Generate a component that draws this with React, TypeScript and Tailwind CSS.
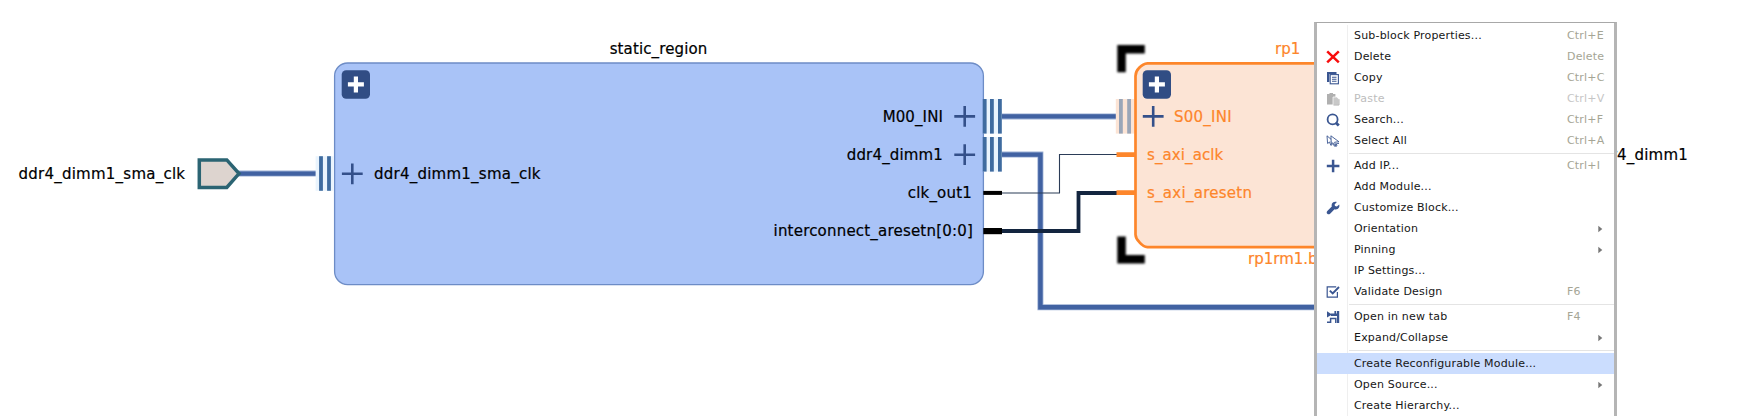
import React from "react";

function InterfaceBars({ x, y, offsets, bar, back, width }: {
  x: number; y: number; offsets: number[]; bar: string; back: string; width: number;
}) {
  return (
    <g>
      <rect x={x} y={y} width={width} height={34.6} fill={back} />
      {offsets.map((o) => (
        <rect key={o} x={x + o} y={y} width={3.8} height={34.6} fill={bar} />
      ))}
    </g>
  );
}

function PinPlus({ x, y }: { x: number; y: number }) {
  return <path d={`M${x - 10.4} ${y}H${x + 10.4}M${x} ${y - 10.4}V${y + 10.4}`} stroke="#34508a" strokeWidth={2.6} />;
}

function ExpandButton({ x, y }: { x: number; y: number }) {
  return (
    <g>
      <rect x={x} y={y} width={28.3} height={28.6} rx={4.5} fill="#314d84" />
      <path d={`M${x + 6.2} ${y + 14.2}h16M${x + 14.2} ${y + 6.2}v16`} stroke="#fff" strokeWidth={4.2} />
    </g>
  );
}

function Wire({ d }: { d: string }) {
  return (
    <g fill="none">
      <path d={d} stroke="#9aaed4" strokeWidth={6} />
      <path d={d} stroke="#4162a2" strokeWidth={4.4} />
    </g>
  );
}

function Drawing() {
  return (
    <svg className="block" width="1749" height="416" viewBox="0 0 1749 416">
      <defs>
        <filter id="soft" x="-20%" y="-20%" width="140%" height="140%">
          <feGaussianBlur stdDeviation="0.9" />
        </filter>
      </defs>

      <rect x={334.6} y={63} width={648.8} height={221.6} rx={13} fill="#a9c3f7" stroke="#6d8cc6" strokeWidth={1.3} />
      <ExpandButton x={341.7} y={70.2} />

      <Wire d="M238 173.6H316" />
      <path d="M199.3 159.9H226.8L239 173.6L226.8 187.5H199.3Z" fill="#ddd4cf" stroke="#2b6473" strokeWidth={3.5} />
      <InterfaceBars x={315.6} y={156.2} offsets={[3.5, 11.5]} width={18} bar="#3f6b9f" back="#eaf4fd" />
      <PinPlus x={352.3} y={173.8} />

      <Wire d="M1002 116.4H1117" />
      <Wire d="M1002 154.6H1040.4V307.3H1316" />
      <path d="M1002 193H1059.5V154.5H1117" fill="none" stroke="#2b3c57" strokeWidth={1.1} />
      <path d="M1002 231H1078.5V193H1117" fill="none" stroke="#13253f" strokeWidth={3.8} />
      <path d="M983.3 192.9H1002" stroke="#000" strokeWidth={4} />
      <path d="M983.3 231.1H1002" stroke="#000" strokeWidth={6.2} />
      <InterfaceBars x={983.2} y={99} offsets={[-0.4, 6.8, 14.8]} width={18.6} bar="#3f6b9f" back="#eaf4fd" />
      <InterfaceBars x={983.2} y={137} offsets={[-0.4, 6.8, 14.8]} width={18.6} bar="#3f6b9f" back="#eaf4fd" />
      <PinPlus x={964.7} y={116.4} />
      <PinPlus x={964.7} y={154.7} />

      <g filter="url(#soft)" fill="#000">
        <path d="M1117.3 45H1144.8V53.5H1125.8V72.3H1117.3Z" />
        <path d="M1117.3 236.5H1125.8V255H1144.8V263.6H1117.3Z" />
      </g>
      <InterfaceBars x={1115.8} y={99} offsets={[3.2, 11.4]} width={18.6} bar="#9aa6b8" back="#fce4d5" />
      <path
        d="M1330 63.3H1147.5Q1143 63.6 1139 68Q1135.5 71.5 1135.5 76V234.5Q1135.6 238.5 1139.5 242.3Q1143.5 246.8 1147.5 247.2H1330"
        fill="#fce4d5" stroke="#fd862b" strokeWidth={2.7}
      />
      <path d="M1116.5 154.6H1135M1116.5 192.7H1135" stroke="#fd862b" strokeWidth={4.8} />
      <ExpandButton x={1142.7} y={70.2} />
      <PinPlus x={1153.2} y={116.4} />
    </svg>
  );
}

/** Names of the pins on the static block, laid over its outline. */
function StaticRegion() {
  return (
    <section className="absolute left-[334px] top-[39px] flex w-[650px] flex-col">
      <h2 className="pr-[1px] text-center tracking-[0.12px]">static_region</h2>
      <div className="mt-12 flex justify-between">
        <div className="pl-10 pt-[57px] tracking-[0.24px]">ddr4_dimm1_sma_clk</div>
        <ul className="flex flex-col items-end gap-[18px] pr-[11px]">
          <li className="pr-[30px] tracking-[0.1px]">M00_INI</li>
          <li className="pr-[30px] tracking-[0.15px]">ddr4_dimm1</li>
          <li className="pr-[1px] tracking-[0.2px]">clk_out1</li>
          <li className="tracking-[0.2px]">interconnect_aresetn[0:0]</li>
        </ul>
      </div>
    </section>
  );
}

function ReconfigurablePartition() {
  return (
    <section className="absolute left-[1135px] top-[39px] flex w-[306px] flex-col text-[#fd862b]">
      <h2 className="pl-[140px]">rp1</h2>
      <ul className="mt-12 flex flex-col gap-[18px] pl-3">
        <li className="pl-[27px] tracking-[0.25px]">S00_INI</li>
        <li className="tracking-[0.1px]">s_axi_aclk</li>
        <li className="tracking-[0.27px]">s_axi_aresetn</li>
      </ul>
      <p className="mt-[46px] pl-[113px]">rp1rm1.bd</p>
    </section>
  );
}

const BLUE = "#3a5691";

function DeleteIcon() {
  return <path d="M1.2 1.4L12.8 12.4M12.8 1.4L1.2 12.4" stroke="#f80d0d" strokeWidth={2.5} fill="none" />;
}
function CopyIcon() {
  return (
    <g>
      <path d="M1 1H10.5V3H3.4V11H1Z" fill={BLUE} />
      <rect x={4.2} y={3.6} width={8.2} height={9.2} fill="#fff" stroke={BLUE} strokeWidth={1.1} />
      <path d="M6 6.3H10.5M6 8.3H10.5M6 10.3H10.5" stroke={BLUE} strokeWidth={1.1} />
    </g>
  );
}
function PasteIcon() {
  return (
    <g>
      <path d="M1 2H3.5V1H7V2H9.4V12.5H1Z" fill="#b0b0b0" />
      <path d="M7 5H10.8L13 7.2V13.2H7Z" fill="#c8c8c8" stroke="#fff" strokeWidth={0.7} />
      <path d="M7.6 13H13V7.2" stroke="#b5b5b5" fill="none" />
    </g>
  );
}
function SearchIcon() {
  return (
    <g fill="none" stroke={BLUE}>
      <circle cx={6.6} cy={6.4} r={5} strokeWidth={1.8} />
      <path d="M9.6 9.4L12.8 12.6" strokeWidth={2.8} />
    </g>
  );
}
function SelectAllIcon() {
  return (
    <g fill="#fff" stroke={BLUE} strokeWidth={0.9}>
      <path d="M1 1.8L1.6 9.5L3.5 8L4.8 11.3L6.2 10.6L5 7.6L7 7Z" />
      <path d="M4.9 1.8L5.3 10.2L7 8.7L8.3 12.2L9.7 11.5L8.6 8.2L13 7.8Z" />
      <path d="M8.6 10.2L9.6 12.4L11 11.8L10.2 9.8L13 9.4" fill="none" />
    </g>
  );
}
function AddIcon() {
  return <path d="M0.8 7H13.4M7.1 0.7V13.3" stroke={BLUE} strokeWidth={2.5} />;
}
function WrenchIcon() {
  return (
    <path
      d="M13.2 3.5L10.9 5.6L9 5.1L8.6 3.4L10.9 1.1C9 .2 6.7 .9 5.9 2.7C5.5 3.7 5.5 4.6 5.8 5.5L1.3 10C.5 10.8 .5 12.1 1.3 12.8C2.1 13.6 3.3 13.5 4.1 12.7L8.5 8.3C10.2 8.9 12.1 8.2 13 6.6C13.5 5.6 13.6 4.5 13.2 3.5Z"
      fill={BLUE}
    />
  );
}
function ValidateIcon() {
  return (
    <g fill="none" stroke={BLUE}>
      <path d="M10.2 1.8H1.2V12.2H11.4V7" strokeWidth={1.2} />
      <path d="M3.8 5.6L6.7 8.5L13 2" strokeWidth={1.9} />
    </g>
  );
}
function OpenTabIcon() {
  return (
    <g fill={BLUE}>
      <path d="M1 1.2L6 4.4L1 7.6Z" />
      <path d="M8.4 1H10.2V3.6H11V1H13.2V13H11V6H5V3.6H8.4Z" />
      <path d="M1 12.2H4.6V8.6H9.8V13" fill="none" stroke={BLUE} strokeWidth={1.5} />
    </g>
  );
}

type Item = {
  text: string;
  icon?: () => React.JSX.Element;
  keys?: string;
  submenu?: boolean;
  disabled?: boolean;
  active?: boolean;
};

const groups: Item[][] = [
  [
    { text: "Sub-block Properties...", keys: "Ctrl+E" },
    { text: "Delete", icon: DeleteIcon, keys: "Delete" },
    { text: "Copy", icon: CopyIcon, keys: "Ctrl+C" },
    { text: "Paste", icon: PasteIcon, keys: "Ctrl+V", disabled: true },
    { text: "Search...", icon: SearchIcon, keys: "Ctrl+F" },
    { text: "Select All", icon: SelectAllIcon, keys: "Ctrl+A" },
  ],
  [
    { text: "Add IP...", icon: AddIcon, keys: "Ctrl+I" },
    { text: "Add Module..." },
    { text: "Customize Block...", icon: WrenchIcon },
    { text: "Orientation", submenu: true },
    { text: "Pinning", submenu: true },
    { text: "IP Settings..." },
    { text: "Validate Design", icon: ValidateIcon, keys: "F6" },
  ],
  [
    { text: "Open in new tab", icon: OpenTabIcon, keys: "F4" },
    { text: "Expand/Collapse", submenu: true },
  ],
  [
    { text: "Create Reconfigurable Module...", active: true },
    { text: "Open Source...", submenu: true },
    { text: "Create Hierarchy..." },
  ],
];

function MenuRow({ item }: { item: Item }) {
  const Icon = item.icon;
  return (
    <div className={`flex h-[21px] items-center ${item.active ? "bg-[#cbddfe]" : ""}`}>
      <div className={`flex h-full w-[31px] shrink-0 items-center pl-[9px] ${item.active ? "" : "border-r border-[#efefef]"}`}>
        {Icon && (
          <svg width="14" height="14" viewBox="0 0 14 14" className="shrink-0">
            <Icon />
          </svg>
        )}
      </div>
      <span className={`w-[213px] shrink-0 pl-[6px] ${item.disabled ? "text-[#bdbdbd]" : "text-[#161616]"}`}>
        {item.text}
      </span>
      <span className={`pl-[6px] ${item.disabled ? "text-[#c6c6c6]" : "text-[#a5a595]"}`}>{item.keys}</span>
      {item.submenu && (
        <svg width="5" height="8" viewBox="0 0 5 8" className="ml-auto mr-[11px]">
          <path d="M0.3 0.8L4.3 4L0.3 7.2Z" fill="#777" />
        </svg>
      )}
    </div>
  );
}

function ContextMenu() {
  return (
    <div className="absolute left-[1314px] top-[22px] h-[400px] w-[303px] border-x-[3px] border-t border-x-[#b5b5b5] border-t-[#a8a8a8] bg-white pt-[2px] text-[11px] leading-[21px] tracking-[0.18px] [-webkit-text-stroke:0]">
      {groups.map((items, i) => (
        <div key={i}>
          {i > 0 && (
            <div className={`flex items-center ${i === 3 ? "h-[5px]" : "h-[4px]"}`}>
              <div className="h-full w-[31px] border-r border-[#efefef]" />
              <div className="ml-[1px] h-px grow bg-[#e4e4e4]" />
            </div>
          )}
          {items.map((item) => (
            <MenuRow key={item.text} item={item} />
          ))}
        </div>
      ))}
    </div>
  );
}

export default function App() {
  return (
    <main className="relative h-[416px] w-[1749px] overflow-hidden whitespace-nowrap bg-white font-['DejaVu_Sans',sans-serif] text-[15px] leading-[20px] text-black [-webkit-text-stroke:0.2px_currentColor]">
      <Drawing />
      <span className="absolute left-[18.5px] top-[164px] tracking-[0.24px]">ddr4_dimm1_sma_clk</span>
      <StaticRegion />
      <ReconfigurablePartition />
      <span className="absolute right-[61px] top-[145px] tracking-[0.2px]">ddr4_dimm1</span>
      <ContextMenu />
    </main>
  );
}
